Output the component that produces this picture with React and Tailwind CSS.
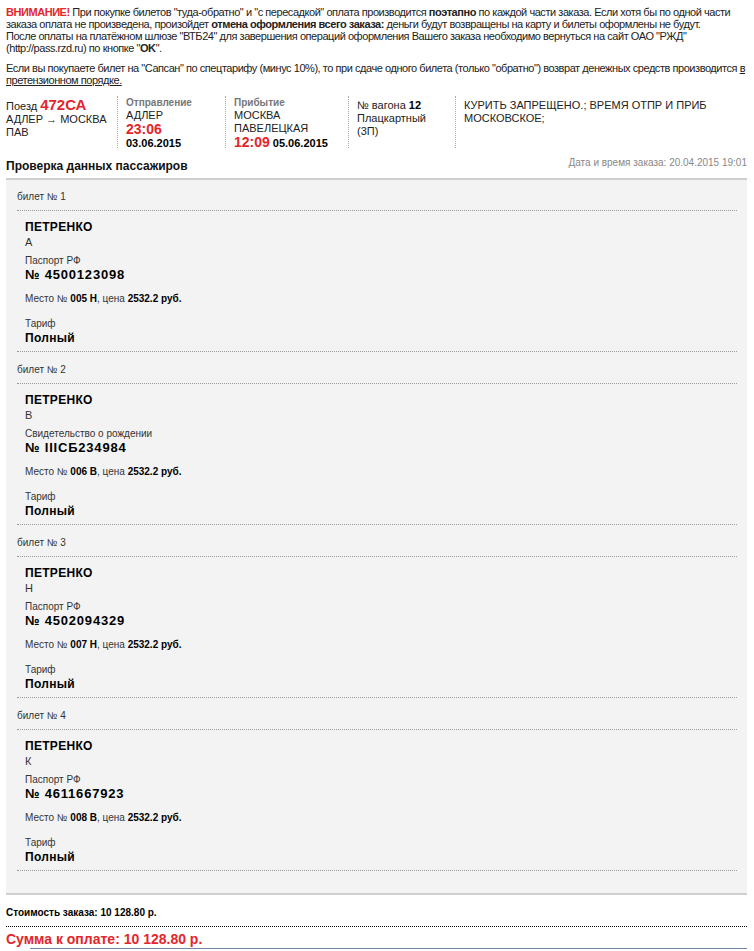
import React from "react";

const tickets = [
  { n: 1, name: "А", docLabel: "Паспорт РФ", doc: "4500123098", seat: "005 Н" },
  { n: 2, name: "В", docLabel: "Свидетельство о рождении", doc: "IIIСБ234984", seat: "006 В" },
  { n: 3, name: "Н", docLabel: "Паспорт РФ", doc: "4502094329", seat: "007 Н" },
  { n: 4, name: "К", docLabel: "Паспорт РФ", doc: "4611667923", seat: "008 В" },
];

function Ticket({ t, first }) {
  return (
    <div className={first ? "pt-[11px]" : "pt-[12px]"}>
      <div className="text-[10px] leading-[12px] text-[#333] pb-[7px] border-b border-dotted border-[#999]">
        билет № {t.n}
      </div>
      <div className="pl-[8px] pt-[9px] pb-[6px] border-b border-dotted border-[#999]">
        <div className="text-[12px] leading-[14px] font-bold text-black tracking-[0.3px]">ПЕТРЕНКО</div>
        <div className="text-[11px] leading-[12px] mt-[2px]">{t.name}</div>
        <div className="text-[10px] leading-[12px] mt-[7px]">{t.docLabel}</div>
        <div className="text-[13px] leading-[15px] font-bold text-black tracking-[0.8px]">№ {t.doc}</div>
        <div className="text-[10px] leading-[12px] mt-[11px]">
          Место № <b className="text-black">{t.seat}</b>, цена <b className="text-black">2532.2 руб.</b>
        </div>
        <div className="text-[10px] leading-[12px] mt-[13px]">Тариф</div>
        <div className="text-[12px] leading-[14px] font-bold text-black mt-[1px] tracking-[0.3px]">Полный</div>
      </div>
    </div>
  );
}

export default function App() {
  return (
    <div className="w-[754px] min-h-[951px] bg-white text-[#222] font-['Liberation_Sans',Arial,sans-serif] pl-[6px] pr-[7px] pt-[6px] overflow-hidden">
      {/* Warning */}
      <div className="text-[11px] leading-[12px] tracking-[-0.45px]">
        <div className="whitespace-nowrap">
          <b className="text-[#e3262b]">ВНИМАНИЕ!</b> При покупке билетов "туда-обратно" и "с пересадкой" оплата производится <b>поэтапно</b> по каждой части заказа. Если хотя бы по одной части
        </div>
        <div className="whitespace-nowrap">
          заказа оплата не произведена, произойдет <b>отмена оформления всего заказа:</b> деньги будут возвращены на карту и билеты оформлены не будут.
        </div>
        <div className="whitespace-nowrap">
          После оплаты на платёжном шлюзе "ВТБ24" для завершения операций оформления Вашего заказа необходимо вернуться на сайт ОАО "РЖД"
        </div>
        <div className="whitespace-nowrap">
          (http://pass.rzd.ru) по кнопке "<b>OK</b>".
        </div>
      </div>
      <div className="text-[11px] leading-[12px] mt-[8px] tracking-[-0.45px]">
        <div className="whitespace-nowrap">
          Если вы покупаете билет на "Сапсан" по спецтарифу (минус 10%), то при сдаче одного билета (только "обратно") возврат денежных средств производится <span className="underline">в</span>
        </div>
        <div className="underline">претензионном порядке.</div>
      </div>

      {/* Train info */}
      <div className="flex mt-[10px] text-[11px] leading-[13px]">
        <div className="w-[111px] pt-[1px]">
          <div className="flex items-baseline gap-[3px]">
            <span>Поезд</span>
            <span className="text-[15px] leading-[16px] font-bold text-[#e3262b]">472СА</span>
          </div>
          <div>АДЛЕР → МОСКВА</div>
          <div>ПАВ</div>
        </div>
        <div className="w-[108px] border-l border-dotted border-[#aaa] pl-[8px] py-[1px] h-[52px]">
          <div className="text-[10px] leading-[12px] font-bold text-[#777]">Отправление</div>
          <div>АДЛЕР</div>
          <div className="text-[14px] leading-[15px] font-bold text-[#e3262b]">23:06</div>
          <div className="font-bold text-black">03.06.2015</div>
        </div>
        <div className="w-[123px] border-l border-dotted border-[#aaa] pl-[8px] py-[1px] h-[52px]">
          <div className="text-[10px] leading-[12px] font-bold text-[#777]">Прибытие</div>
          <div>МОСКВА</div>
          <div>ПАВЕЛЕЦКАЯ</div>
          <div className="flex items-baseline gap-[3px]">
            <span className="text-[14px] leading-[15px] font-bold text-[#e3262b]">12:09</span>
            <span className="font-bold text-black">05.06.2015</span>
          </div>
        </div>
        <div className="w-[107px] border-l border-dotted border-[#aaa] pl-[8px] pt-[3px] h-[52px]">
          <div>
            № вагона <b className="text-black">12</b>
          </div>
          <div>Плацкартный</div>
          <div>(3П)</div>
        </div>
        <div className="flex-1 border-l border-dotted border-[#aaa] pl-[8px] pt-[3px] h-[52px]">
          <div>КУРИТЬ ЗАПРЕЩЕНО.; ВРЕМЯ ОТПР И ПРИБ</div>
          <div>МОСКОВСКОЕ;</div>
        </div>
      </div>

      {/* Heading */}
      <div className="flex items-start justify-between mt-[9px]">
        <div className="text-[12px] leading-[14px] font-bold text-[#111] mt-[2px]">Проверка данных пассажиров</div>
        <div className="text-[10px] leading-[12px] text-[#888]">Дата и время заказа: 20.04.2015 19:01</div>
      </div>

      {/* Passengers */}
      <div className="mt-[5px] bg-[#f3f3f3] border-t-2 border-b-2 border-[#cfcfcf] pl-[11px] pr-[10px] pb-[22px] text-[#333]">
        {tickets.map((t, i) => (
          <Ticket key={t.n} t={t} first={i === 0} />
        ))}
      </div>

      {/* Totals */}
      <div className="text-[10px] leading-[12px] font-bold text-black mt-[12px] pb-[7px] border-b border-dotted border-black">
        Стоимость заказа: 10 128.80 р.
      </div>
      <div className="text-[14px] leading-[16px] font-bold text-[#e3262b] mt-[4px]">Сумма к оплате: 10 128.80 р.</div>
      <div className="ml-[24px] mt-[1px] border-t border-[#6f86a6] h-[4px]"></div>
    </div>
  );
}
